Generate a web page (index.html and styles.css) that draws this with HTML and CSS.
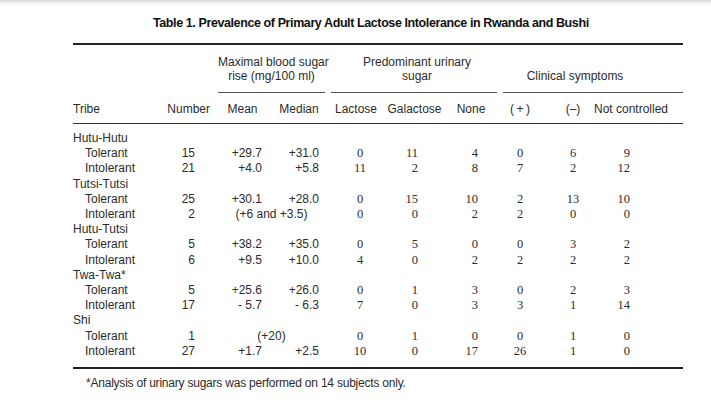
FILE: index.html
```html
<!DOCTYPE html>
<html lang="en">
<head>
<meta charset="utf-8">
<title>Table 1</title>
<link rel="stylesheet" href="styles.css">
</head>
<body>
<div class="page">
  <h1 class="title">Table 1. Prevalence of Primary Adult Lactose Intolerance in Rwanda and Bushi</h1>
  <table class="data">
    <colgroup>
      <col class="c-tribe"><col class="c-num"><col class="c-mean"><col class="c-med">
      <col class="c-lac"><col class="c-gal"><col class="c-none">
      <col class="c-pos"><col class="c-neg"><col class="c-nc">
    </colgroup>
    <thead>
      <tr class="groups">
        <th></th><th></th>
        <th colspan="2"><div class="grp g-blood">Maximal blood sugar<br>rise (mg/100 ml)</div></th>
        <th colspan="3"><div class="grp g-urine">Predominant urinary<br>sugar</div></th>
        <th colspan="3"><div class="grp g-clin"><br>Clinical symptoms</div></th>
      </tr>
      <tr class="cols">
        <th class="h-tribe">Tribe</th>
        <th class="h-num">Number</th>
        <th class="h-mean">Mean</th>
        <th class="h-med">Median</th>
        <th class="h-lac">Lactose</th>
        <th class="h-gal">Galactose</th>
        <th class="h-none">None</th>
        <th class="h-pos">(&#8201;+&#8201;)</th>
        <th class="h-neg">(&#8211;)</th>
        <th class="h-nc">Not controlled</th>
      </tr>
    </thead>
    <tbody>
      <tr class="first"><td class="grp-name" colspan="10">Hutu-Hutu</td></tr>
      <tr><td class="sub">Tolerant</td><td class="num">15</td><td class="mean">+29.7</td><td class="med">+31.0</td><td class="lac">0</td><td class="gal">11</td><td class="none">4</td><td class="pos">0</td><td class="neg">6</td><td class="nc">9</td></tr>
      <tr><td class="sub">Intolerant</td><td class="num">21</td><td class="mean">+4.0</td><td class="med">+5.8</td><td class="lac">11</td><td class="gal">2</td><td class="none">8</td><td class="pos">7</td><td class="neg">2</td><td class="nc">12</td></tr>
      <tr><td class="grp-name" colspan="10">Tutsi-Tutsi</td></tr>
      <tr><td class="sub">Tolerant</td><td class="num">25</td><td class="mean">+30.1</td><td class="med">+28.0</td><td class="lac">0</td><td class="gal">15</td><td class="none">10</td><td class="pos">2</td><td class="neg">13</td><td class="nc">10</td></tr>
      <tr><td class="sub">Intolerant</td><td class="num">2</td><td class="pair" colspan="2">(+6 and +3.5)</td><td class="lac">0</td><td class="gal">0</td><td class="none">2</td><td class="pos">2</td><td class="neg">0</td><td class="nc">0</td></tr>
      <tr><td class="grp-name" colspan="10">Hutu-Tutsi</td></tr>
      <tr><td class="sub">Tolerant</td><td class="num">5</td><td class="mean">+38.2</td><td class="med">+35.0</td><td class="lac">0</td><td class="gal">5</td><td class="none">0</td><td class="pos">0</td><td class="neg">3</td><td class="nc">2</td></tr>
      <tr><td class="sub">Intolerant</td><td class="num">6</td><td class="mean">+9.5</td><td class="med">+10.0</td><td class="lac">4</td><td class="gal">0</td><td class="none">2</td><td class="pos">2</td><td class="neg">2</td><td class="nc">2</td></tr>
      <tr><td class="grp-name" colspan="10">Twa-Twa*</td></tr>
      <tr><td class="sub">Tolerant</td><td class="num">5</td><td class="mean">+25.6</td><td class="med">+26.0</td><td class="lac">0</td><td class="gal">1</td><td class="none">3</td><td class="pos">0</td><td class="neg">2</td><td class="nc">3</td></tr>
      <tr><td class="sub">Intolerant</td><td class="num">17</td><td class="mean">- 5.7</td><td class="med">- 6.3</td><td class="lac">7</td><td class="gal">0</td><td class="none">3</td><td class="pos">3</td><td class="neg">1</td><td class="nc">14</td></tr>
      <tr><td class="grp-name" colspan="10">Shi</td></tr>
      <tr><td class="sub">Tolerant</td><td class="num">1</td><td class="pair" colspan="2">(+20)</td><td class="lac">0</td><td class="gal">1</td><td class="none">0</td><td class="pos">0</td><td class="neg">1</td><td class="nc">0</td></tr>
      <tr class="last"><td class="sub">Intolerant</td><td class="num">27</td><td class="mean">+1.7</td><td class="med">+2.5</td><td class="lac">10</td><td class="gal">0</td><td class="none">17</td><td class="pos">26</td><td class="neg">1</td><td class="nc">0</td></tr>
    </tbody>
  </table>
  <p class="note">*Analysis of urinary sugars was performed on 14 subjects only.</p>
</div>
</body>
</html>
```

FILE: styles.css
```css
html, body {
  margin: 0;
  padding: 0;
}
body {
  width: 711px;
  height: 403px;
  overflow: hidden;
  background: linear-gradient(#d8d8d8, #f4f4f4 3px, #ffffff 6px) no-repeat;
  background-size: 100% 6px;
  background-color: #fff;
  font-family: "Liberation Sans", Arial, sans-serif;
  font-size: 12px;
  color: #2b2b2b;
}
.page {
  padding: 15px 0 0 73px;
  width: 610px;
}
.title {
  margin: 0 0 12px 0;
  padding-left: 80px;
  font-size: 12.5px;
  line-height: 16px;
  font-weight: bold;
  color: #111;
  letter-spacing: -0.4px;
  white-space: nowrap;
}
.data {
  width: 610px;
  table-layout: fixed;
  border-collapse: collapse;
  border-spacing: 0;
  border-top: 2px solid #222;
  border-bottom: 2px solid #222;
}
.c-tribe { width: 87px; }
.c-num { width: 55px; }
.c-mean { width: 55px; }
.c-med { width: 58px; }
.c-lac { width: 56px; }
.c-gal { width: 61px; }
.c-none { width: 52px; }
.c-pos { width: 51px; }
.c-neg { width: 44px; }
.c-nc { width: 91px; }

th, td {
  padding: 0;
  font-weight: normal;
  white-space: nowrap;
}
.groups th {
  padding-top: 10px;
  vertical-align: bottom;
}
.grp {
  text-align: center;
  line-height: 14px;
  padding-bottom: 9px;
  border-bottom: 1px solid #555;
}
.g-blood { margin: 0 3px 0 3px; }
.g-urine { margin: 0 0 0 3px; padding-left: 6px; }
.g-clin { margin: 0 0 0 6px; padding-right: 36px; }

.cols th {
  padding-top: 9px;
  padding-bottom: 7px;
  line-height: 14px;
  border-bottom: 1.5px solid #333;
}
.h-tribe { text-align: left; }
.h-num { text-align: right; padding-right: 5px; }
.h-mean { text-align: center; }
.h-med { text-align: center; }
.h-lac { text-align: center; }
.h-gal { text-align: center; }
.h-none { text-align: center; }
.h-pos { text-align: center; padding-right: 5px; }
.h-neg { text-align: center; padding-left: 6px; }
.h-nc { text-align: right; padding-right: 15px; }

tbody td {
  line-height: 15.2px;
  height: 15.2px;
}
tbody tr.first td { padding-top: 7px; }
tbody tr.last td { padding-bottom: 8px; }
.grp-name { text-align: left; }
.sub { padding-left: 12px; }
.num { text-align: right; padding-right: 20px; }
.mean { text-align: right; padding-right: 8px; }
.med { text-align: right; padding-right: 9px; }
.pair { text-align: center; }
.lac, .gal, .none, .pos, .neg, .nc {
  font-family: "Liberation Serif", "Times New Roman", serif;
  font-size: 12.5px;
}
.lac { text-align: center; padding-left: 8px; }
.gal { text-align: right; padding-right: 27px; }
.none { text-align: right; padding-right: 19px; }
.pos { text-align: center; padding-right: 5px; }
.neg { text-align: center; padding-left: 6px; }
.nc { text-align: right; padding-right: 53px; }

.note {
  margin: 7px 0 0 0;
  padding-left: 13px;
  line-height: 14px;
  font-size: 12px;
  letter-spacing: -0.22px;
  color: #2b2b2b;
}
```
